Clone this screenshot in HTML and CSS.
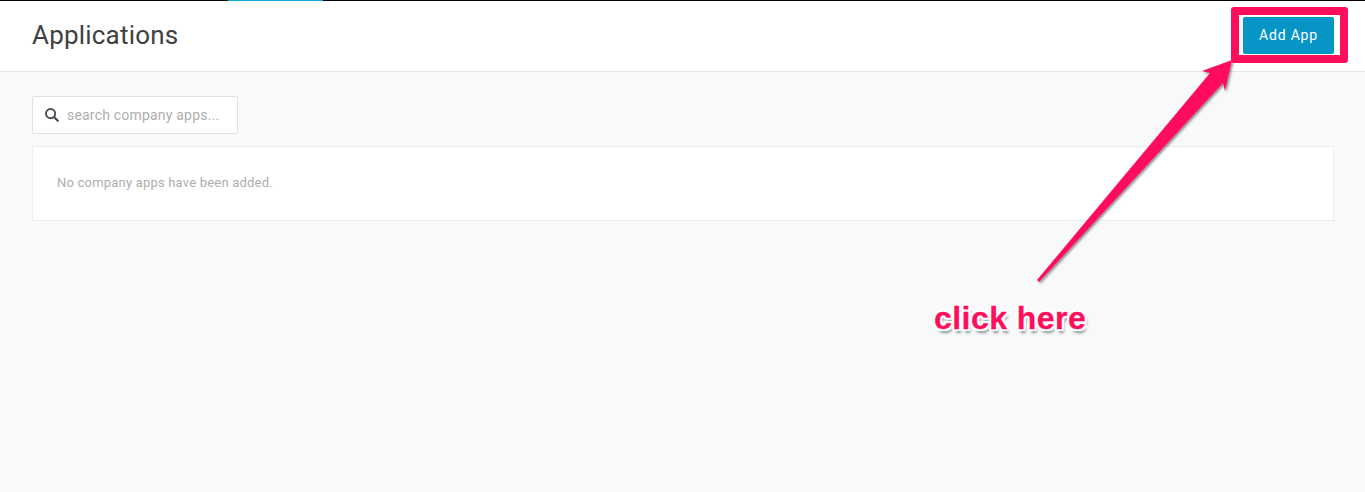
FILE: index.html
```html
<!DOCTYPE html>
<html lang="en">
<head>
<meta charset="utf-8">
<title>Applications</title>
<link rel="stylesheet" href="styles.css">
</head>
<body>
<div class="topbar"><span class="topbar-active"></span></div>
<header class="header">
  <h1 class="title">Applications</h1>
  <button class="add-btn" type="button">Add App</button>
</header>
<main class="content">
  <div class="search">
    <svg class="search-icon" width="14" height="14" viewBox="0 0 14 14" aria-hidden="true">
      <circle cx="5.6" cy="5.6" r="4.6" fill="none" stroke="#4a4d55" stroke-width="1.9"/>
      <path d="M9.2 9.2 L12.8 12.8" stroke="#4a4d55" stroke-width="2.2" stroke-linecap="round"/>
    </svg>
    <span class="search-text">search company apps...</span>
  </div>
  <section class="panel">No company apps have been added.</section>
</main>
<svg class="arrow" width="240" height="240" viewBox="0 0 240 240" aria-hidden="true">
  <defs>
    <filter id="arrow-shadow" x="-20%" y="-20%" width="140%" height="140%">
      <feDropShadow dx="1.5" dy="1.5" stdDeviation="1" flood-color="#000" flood-opacity="0.45"/>
    </filter>
  </defs>
  <path d="M212 10 L205 41 L203 33 L19 232 L17 230 L190 23 L182 21 Z" fill="#ff0f5b" filter="url(#arrow-shadow)"/>
</svg>
<div class="highlight"></div>
<div class="callout">click here</div>
</body>
</html>
```
FILE: styles.css
```css
* { box-sizing: border-box; }
html, body { margin: 0; height: 100%; }
body {
  position: relative;
  overflow: hidden;
  background: #f8f9fb;
  font-family: Roboto, "Liberation Sans", sans-serif;
  display: flex;
  flex-direction: column;
}
.topbar { height: 1px; background: #000; padding-left: 228px; flex: none; }
.topbar-active { display: block; width: 95px; height: 1px; background: #0fa8e0; }
.header {
  height: 71px;
  flex: none;
  background: #fff;
  border-bottom: 1px solid #e4e6e9;
  display: flex;
  align-items: flex-start;
  justify-content: space-between;
  padding: 16px 31px 0 32px;
}
.title {
  margin: 1px 0 0;
  font-size: 26px;
  line-height: 34px;
  font-weight: 400;
  color: #3f3f3f;
  letter-spacing: 0.2px;
}
.add-btn {
  width: 91px;
  height: 37px;
  border: 0;
  border-radius: 2px;
  background: #0795c6;
  color: #fff;
  font-family: inherit;
  font-size: 14px;
  letter-spacing: 0.8px;
  padding: 0 0 2px;
}
.content { padding: 24px 31px 0 32px; }
.search {
  width: 206px;
  height: 38px;
  background: #fff;
  border: 1px solid #dfe1e5;
  border-radius: 2px;
  display: flex;
  align-items: center;
  padding-left: 12px;
  gap: 8px;
}
.search-icon { flex: none; }
.search-text { font-size: 14px; color: #aeaeae; letter-spacing: 0.2px; }
.panel {
  margin-top: 12px;
  height: 75px;
  background: #fff;
  border: 1px solid #eaecef;
  padding: 0 24px 2px;
  display: flex;
  align-items: center;
  font-size: 13px;
  letter-spacing: 0.2px;
  color: #aeaeae;
}
.arrow { position: absolute; left: 1020px; top: 50px; }
.highlight {
  position: absolute;
  left: 1231px;
  top: 7px;
  width: 117px;
  height: 56px;
  border: 8px solid #ff0f5b;
  border-radius: 3px;
}
.callout {
  position: absolute;
  left: 934px;
  top: 299px;
  font-family: "Liberation Sans", Arial, sans-serif;
  font-weight: 700;
  font-size: 32px;
  letter-spacing: 0.45px;
  line-height: 38px;
  color: #ff0f5b;
  -webkit-text-stroke: 0.3px #ff0f5b;
  text-shadow:
    2px 0 0 #fff, -2px 0 0 #fff, 0 2px 0 #fff, 0 -2px 0 #fff,
    2px 2px 0 #fff, -2px 2px 0 #fff, 2px -2px 0 #fff, -2px -2px 0 #fff,
    2px 4px 3px rgba(0,0,0,.45);
  white-space: nowrap;
}
```
